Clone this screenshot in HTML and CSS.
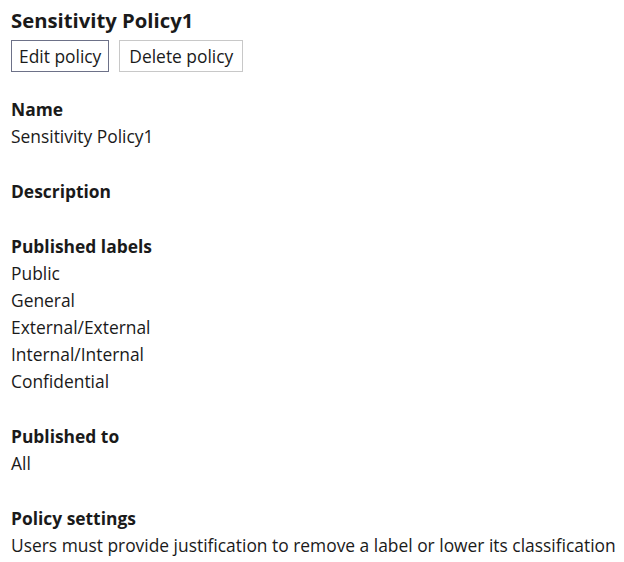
FILE: index.html
```html
<!DOCTYPE html>
<html lang="en">
<head>
  <meta charset="UTF-8" />
  <title>Sensitivity Policy1</title>
  <link rel="stylesheet" href="styles.css">
</head>
<body>
  <h1 class="title">Sensitivity Policy1</h1>
  <div class="actions">
    <button type="button" class="btn btn-focus">Edit policy</button>
    <button type="button" class="btn btn-wide">Delete policy</button>
  </div>

  <dl class="details">
    <div class="section">
      <dt>Name</dt>
      <dd>Sensitivity Policy1</dd>
    </div>
    <div class="section">
      <dt>Description</dt>
    </div>
    <div class="section">
      <dt>Published labels</dt>
      <dd>Public</dd>
      <dd>General</dd>
      <dd>External/External</dd>
      <dd>Internal/Internal</dd>
      <dd>Confidential</dd>
    </div>
    <div class="section">
      <dt>Published to</dt>
      <dd>All</dd>
    </div>
    <div class="section">
      <dt>Policy settings</dt>
      <dd>Users must provide justification to remove a label or lower its classification</dd>
    </div>
  </dl>
</body>
</html>
```

FILE: styles.css
```css
body {
  font-family: "Open Sans", "Noto Sans", sans-serif;
  color: #1a1a1a;
  background-color: white;
  margin: 0;
  padding: 6px 0 0 11px;
}
.title {
  font-size: 20.3px;
  font-weight: bold;
  margin: 0;
  line-height: 28px;
}
.actions {
  display: flex;
  gap: 10px;
  margin-top: 6px;
}
.btn {
  font-family: inherit;
  font-size: 17.4px;
  color: #1a1a1a;
  background-color: white;
  border: 1px solid #c8c8c8;
  height: 32px;
  padding: 0 7px;
  cursor: pointer;
}
.btn-wide {
  padding: 0 9px;
}
.btn-focus {
  border-color: #6d7188;
}
.details {
  margin: 24px 0 0;
}
.section {
  margin-bottom: 28px;
}
.section:last-child {
  margin-bottom: 0;
}
dt {
  font-weight: bold;
  font-size: 17.4px;
  line-height: 27px;
}
dd {
  margin: 0;
  font-size: 17.4px;
  line-height: 27px;
  white-space: nowrap;
}
```
